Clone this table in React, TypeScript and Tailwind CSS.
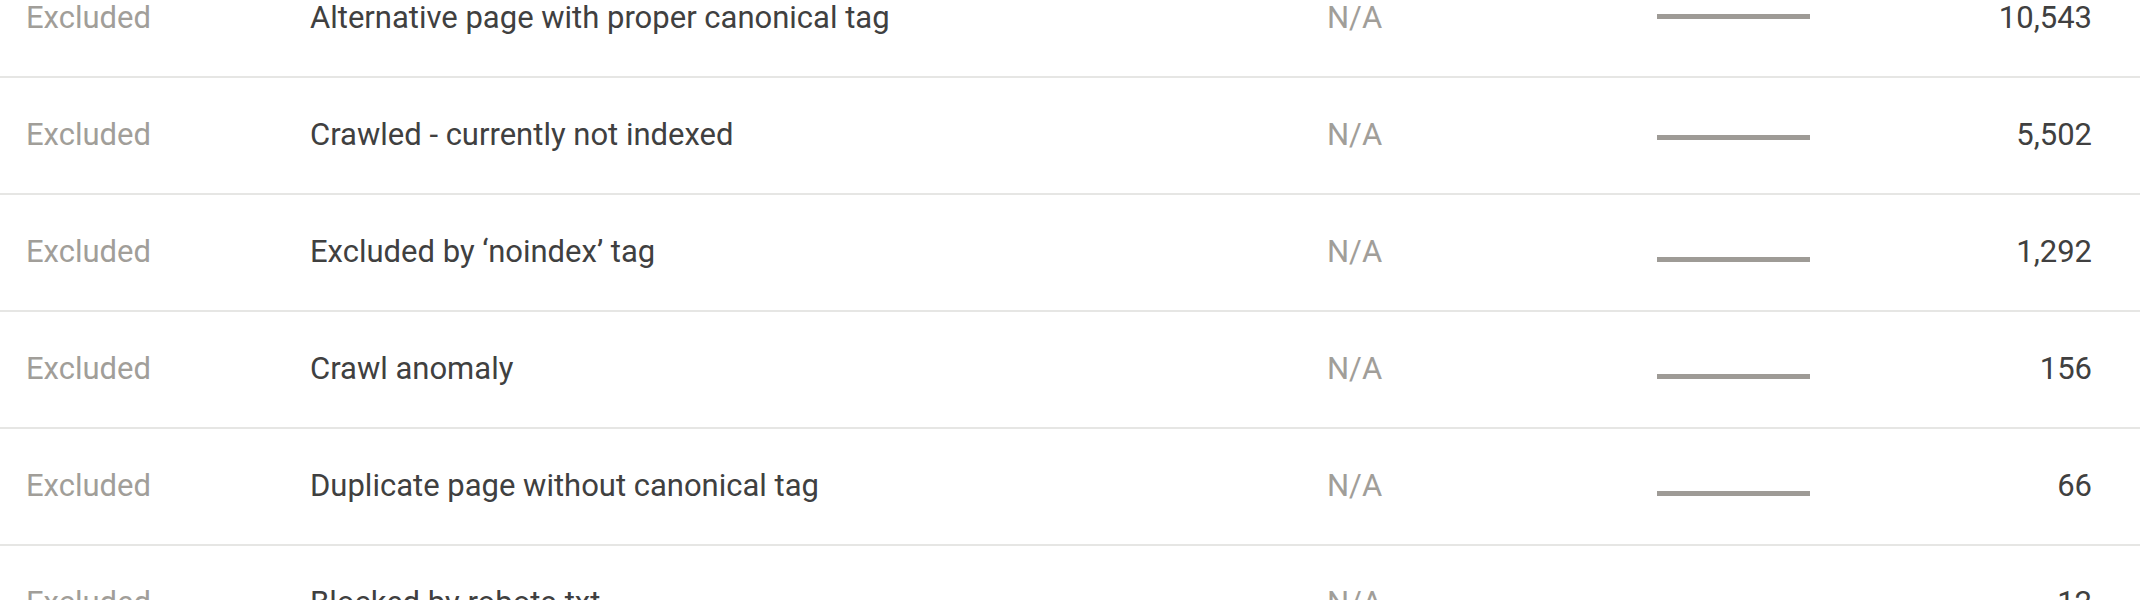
import React from "react";

type Row = {
  status: string;
  reason: string;
  source: string;
  count: string;
  lineShift: string;
};

const rows: Row[] = [
  { status: "Excluded", reason: "Alternative page with proper canonical tag", source: "N/A", count: "10,543", lineShift: "translate-y-[-2px]" },
  { status: "Excluded", reason: "Crawled - currently not indexed", source: "N/A", count: "5,502", lineShift: "translate-y-[2px]" },
  { status: "Excluded", reason: "Excluded by \u2018noindex\u2019 tag", source: "N/A", count: "1,292", lineShift: "translate-y-[7px]" },
  { status: "Excluded", reason: "Crawl anomaly", source: "N/A", count: "156", lineShift: "translate-y-[7px]" },
  { status: "Excluded", reason: "Duplicate page without canonical tag", source: "N/A", count: "66", lineShift: "translate-y-[7px]" },
  { status: "Excluded", reason: "Blocked by robots.txt", source: "N/A", count: "12", lineShift: "translate-y-[7px]" },
];

const TableRow = ({ row }: { row: Row }) => (
  <div className="flex items-center h-[117px] border-b-2 border-[#e6e6e4] pl-[26px] pr-[48px]">
    <div className="w-[284px] shrink-0 text-[#a19e99]">{row.status}</div>
    <div className="flex-1 text-[#404040]">{row.reason}</div>
    <div className="w-[330px] shrink-0 text-[#a19e99]">{row.source}</div>
    <div className="w-[153px] shrink-0 flex items-center">
      <div className={`h-[5px] w-full bg-[#9e9b96] ${row.lineShift}`} />
    </div>
    <div className="flex-1 max-w-[282px] text-right text-[#404040]">{row.count}</div>
  </div>
);

export default function App() {
  return (
    <div className="w-[2140px] h-[600px] overflow-hidden bg-white font-['Roboto',sans-serif] text-[31px]">
      <div className="mt-[-39px]">
        {rows.map((row, i) => (
          <TableRow key={i} row={row} />
        ))}
      </div>
    </div>
  );
}
